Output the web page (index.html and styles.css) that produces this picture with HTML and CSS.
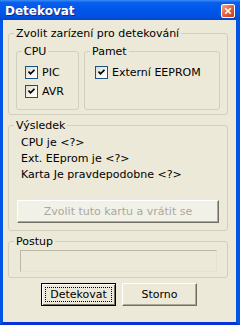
FILE: index.html
```html
<!DOCTYPE html>
<html lang="cs">
<head>
    <meta charset="UTF-8">
    <title>Detekovat</title>
    <link rel="stylesheet" href="styles.css">
</head>
<body>

<div class="window">
    <div class="titlebar">
        <span class="title">Detekovat</span>
        <span class="close">
            <svg width="13" height="13" viewBox="0 0 13 13">
                <path d="M3.5 3.5 L9.5 9.5 M9.5 3.5 L3.5 9.5" stroke="#fff" stroke-width="1.8"/>
            </svg>
        </span>
    </div>

    <div class="client">
        <!-- Device selection -->
        <fieldset class="group outer">
            <legend>Zvolit zarízení pro detekování</legend>
            <div class="inner-row">
                <fieldset class="group cpu">
                    <legend>CPU</legend>
                    <div class="checks">
                        <label class="check"><span class="box"><svg width="7" height="7" viewBox="0 0 7 7"><path d="M0.5 2.5 L2.5 4.8 L6.5 0.8" fill="none" stroke="#000" stroke-width="1.7"/></svg></span>PIC</label>
                        <label class="check"><span class="box"><svg width="7" height="7" viewBox="0 0 7 7"><path d="M0.5 2.5 L2.5 4.8 L6.5 0.8" fill="none" stroke="#000" stroke-width="1.7"/></svg></span>AVR</label>
                    </div>
                </fieldset>
                <fieldset class="group mem">
                    <legend>Pamet</legend>
                    <div class="checks">
                        <label class="check"><span class="box"><svg width="7" height="7" viewBox="0 0 7 7"><path d="M0.5 2.5 L2.5 4.8 L6.5 0.8" fill="none" stroke="#000" stroke-width="1.7"/></svg></span>Externí EEPROM</label>
                    </div>
                </fieldset>
            </div>
        </fieldset>

        <!-- Result -->
        <fieldset class="group result">
            <legend>Výsledek</legend>
            <div class="result-body">
                <div class="line">CPU je &lt;?&gt;</div>
                <div class="line">Ext. EEprom je &lt;?&gt;</div>
                <div class="line">Karta Je pravdepodobne &lt;?&gt;</div>
                <button class="btn wide" disabled>Zvolit tuto kartu a vrátit se</button>
            </div>
        </fieldset>

        <!-- Progress -->
        <fieldset class="group progress">
            <legend>Postup</legend>
            <div class="progress-body">
                <div class="bar"></div>
            </div>
        </fieldset>

        <div class="actions">
            <button class="btn default"><span class="focus">Detekovat</span></button>
            <button class="btn">Storno</button>
        </div>
    </div>
</div>

</body>
</html>
```

FILE: styles.css
```css
body {
    margin: 0;
    padding: 0;
    background-color: #ECE9D8;
    font-family: "DejaVu Sans", Tahoma, sans-serif;
    font-size: 11px;
    color: #000;
}
.window {
    width: 240px;
    height: 325px;
    display: flex;
    flex-direction: column;
    background-color: #ECE9D8;
}
.titlebar {
    height: 20px;
    display: flex;
    align-items: center;
    justify-content: space-between;
    padding: 0 5px 0 5px;
    background: linear-gradient(to bottom, #3C8CF8 0%, #0A5FEA 12%, #0058EE 40%, #0052E0 80%, #0046CC 100%);
    color: #fff;
}
.title {
    font-weight: bold;
    font-size: 12px;
    padding-top: 2px;
    text-shadow: 1px 1px 0 #0A2E8C;
}
.close {
    width: 14px;
    height: 14px;
    margin-top: 1px;
    border: 1px solid #fff;
    border-radius: 2px;
    box-sizing: border-box;
    background: linear-gradient(135deg, #F4A888 0%, #E2603A 50%, #C63E1A 100%);
    display: flex;
}
.close svg {
    width: 12px;
    height: 12px;
}
.client {
    flex: 1;
    border-left: 3px solid #0055E5;
    border-right: 4px solid #0055E5;
    border-bottom: 3px solid #0831D9;
    padding: 0 8px 0 5px;
    display: flex;
    flex-direction: column;
}
.group {
    margin: 0;
    padding: 0;
    min-width: 0;
    border: 1px solid #D0D0BF;
    border-radius: 3px;
}
.group legend {
    margin-left: 5px;
    padding: 0 2px;
    line-height: 13px;
}
.outer {
    margin-top: 7px;
}
.inner-row {
    display: flex;
    align-items: flex-start;
    gap: 5px;
    padding: 5px 7px 4px 7px;
}
.cpu,
.mem {
    box-sizing: border-box;
    height: 65px;
}
.cpu {
    width: 63px;
}
.mem {
    flex: 1;
}
.checks {
    display: flex;
    flex-direction: column;
    gap: 6px;
    padding: 8px 0 0 8px;
}
.mem .checks {
    padding-left: 10px;
}
.check {
    display: flex;
    align-items: center;
    gap: 4px;
    height: 13px;
}
.box {
    width: 13px;
    height: 13px;
    box-sizing: border-box;
    border: 1px solid #1C5180;
    background: linear-gradient(135deg, #DCDCD3 0%, #F4F4F0 60%, #fff 100%);
    display: flex;
    align-items: center;
    justify-content: center;
}
.result {
    margin-top: 4px;
}
.result-body {
    padding: 3px 8px 7px 8px;
    display: flex;
    flex-direction: column;
}
.line {
    line-height: 16px;
    padding-left: 4px;
}
.btn {
    font-family: inherit;
    font-size: 11px;
    color: #000;
    background-color: #ECE9D8;
    border: 1px solid;
    border-color: #fff #716F64 #716F64 #fff;
    box-shadow: inset -1px -1px 0 #ACA899;
    height: 23px;
    width: 75px;
    padding: 0;
}
.wide {
    width: 100%;
    margin-top: 17px;
    color: #ACA899;
    background-color: #F2F1E8;
}
.progress {
    margin-top: 4px;
}
.progress-body {
    padding: 2px 10px 5px 11px;
}
.bar {
    height: 22px;
    box-sizing: border-box;
    border: 1px solid #BAB8A8;
    border-right-color: #E4E2D6;
    border-bottom-color: #E4E2D6;
}
.actions {
    display: flex;
    justify-content: center;
    gap: 6px;
    margin-top: 5px;
    padding-left: 2px;
}
.default {
    border: 1px solid #000;
    box-shadow: inset 1px 1px 0 #fff, inset -1px -1px 0 #716F64;
    padding: 3px;
}
.focus {
    display: block;
    height: 100%;
    box-sizing: border-box;
    border: 1px dotted #000;
    line-height: 14px;
}
```
